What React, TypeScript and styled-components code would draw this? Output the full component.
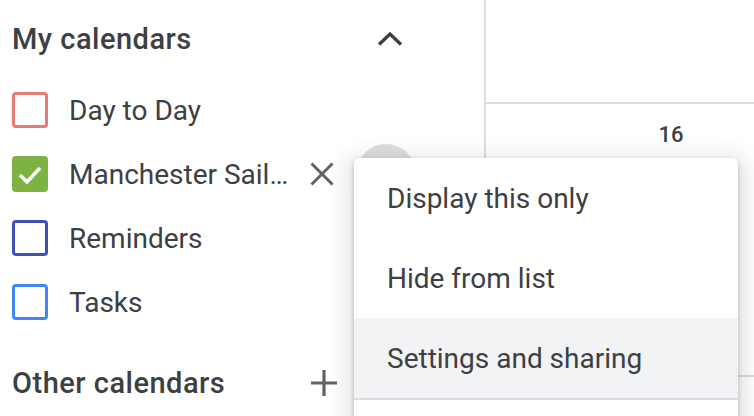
import React from "react";
import styled, { createGlobalStyle } from "styled-components";

const Global = createGlobalStyle`
  html, body { margin: 0; padding: 0; background: #fff; }
  body { font-family: Roboto, "Noto Sans", Arial, sans-serif; color: #3c4043; }
  * { box-sizing: border-box; }
`;

const Root = styled.div`
  position: relative;
  width: 754px;
  height: 416px;
  overflow: hidden;
  display: flex;
  background: #fff;
`;

const Sidebar = styled.aside`
  flex: 0 0 486px;
  width: 486px;
  min-width: 0;
  overflow: hidden;
  border-right: 2px solid #dadce0;
  padding: 0 68px 0 12px;
  display: flex;
  flex-direction: column;
`;

const Header = styled.div<{ $top?: number; $padRight?: number }>`
  height: 78px;
  margin-top: ${(p) => p.$top ?? 0}px;
  padding-right: ${(p) => p.$padRight ?? 0}px;
  display: flex;
  align-items: center;
  flex-shrink: 0;
  min-width: 0;
`;

const HeaderTitle = styled.h2`
  flex: 1;
  margin: 0;
  font-family: Roboto, Arial, sans-serif;
  font-weight: 500;
  font-size: 29px;
  letter-spacing: 0.5px;
  color: #3c4043;
  white-space: nowrap;
`;

const IconButton = styled.button<{ $size?: number; $hover?: boolean; $gap?: number }>`
  width: ${(p) => p.$size ?? 48}px;
  height: ${(p) => p.$size ?? 48}px;
  margin-left: ${(p) => p.$gap ?? 0}px;
  flex-shrink: 0;
  border: none;
  border-radius: 50%;
  padding: 0;
  background: ${(p) => (p.$hover ? "#dedfe0" : "transparent")};
  display: flex;
  align-items: center;
  justify-content: center;
  color: #5f6368;
`;

const Row = styled.div`
  height: 64px;
  display: flex;
  align-items: center;
  flex-shrink: 0;
  min-width: 0;
`;

const Box = styled.span<{ $color: string; $checked?: boolean }>`
  width: 36px;
  height: 36px;
  flex-shrink: 0;
  border: 3.5px solid ${(p) => p.$color};
  border-radius: 4px;
  background: ${(p) => (p.$checked ? p.$color : "transparent")};
  display: flex;
  align-items: center;
  justify-content: center;
  margin-right: 21px;
`;

const Label = styled.span`
  flex: 1;
  min-width: 0;
  font-size: 28px;
  color: #3c4043;
  white-space: nowrap;
  overflow: hidden;
  text-overflow: ellipsis;
  padding-right: 8px;
`;

const Main = styled.main`
  flex: 0 0 370px;
  display: flex;
  flex-direction: column;
`;

const TopCell = styled.div`
  height: 104px;
  border-bottom: 2px solid #dadce0;
  flex-shrink: 0;
`;

const DayCell = styled.div`
  height: 273px;
  border-bottom: 2px solid #dadce0;
  display: flex;
  justify-content: center;
  padding-top: 17px;
  flex-shrink: 0;
`;

const DayNum = styled.span`
  font-size: 22px;
  font-weight: 500;
  color: #3c4043;
  line-height: 28px;
  height: 28px;
`;

const Menu = styled.div`
  position: absolute;
  left: 354px;
  top: 158px;
  width: 384px;
  background: #fff;
  border-radius: 6px;
  box-shadow: 0 2px 4px 0 rgba(60, 64, 67, 0.3), 0 6px 20px 8px rgba(60, 64, 67, 0.15);
  display: flex;
  flex-direction: column;
  overflow: hidden;
`;

const MenuItem = styled.div<{ $active?: boolean }>`
  height: 80px;
  display: flex;
  align-items: center;
  padding-left: 33px;
  font-size: 28px;
  color: #3c4043;
  background: ${(p) => (p.$active ? "#f1f3f4" : "#fff")};
`;

const MenuDivider = styled.div`
  height: 2px;
  background: #dadce0;
  margin-bottom: 60px;
`;

const Check = () => (
  <svg width="30" height="30" viewBox="0 0 30 30">
    <polyline points="5,16 12,23 25,9" fill="none" stroke="#fff" strokeWidth="3.5" />
  </svg>
);

const Chevron = () => (
  <svg width="26" height="16" viewBox="0 0 26 16">
    <polyline points="2,13.5 13,3 24,13.5" fill="none" stroke="#3c4043" strokeWidth="3.4" />
  </svg>
);

const Close = () => (
  <svg width="24" height="24" viewBox="0 0 24 24">
    <path d="M1.5 1.5 L22.5 22.5 M22.5 1.5 L1.5 22.5" stroke="#5f6368" strokeWidth="3" />
  </svg>
);

const Plus = () => (
  <svg width="28" height="28" viewBox="0 0 28 28">
    <path d="M14 1 V27 M1 14 H27" stroke="#5f6368" strokeWidth="3.2" />
  </svg>
);

const calendars = [
  { name: "Day to Day", color: "#e67c73" },
  { name: "Manchester Sailing Club", color: "#7cb342", checked: true, active: true },
  { name: "Reminders", color: "#3f51b5" },
  { name: "Tasks", color: "#4285f4" },
];

export default function App() {
  return (
    <Root>
      <Global />
      <Sidebar>
        <Header $padRight={2}>
          <HeaderTitle>My calendars</HeaderTitle>
          <IconButton aria-label="Collapse">
            <Chevron />
          </IconButton>
        </Header>
        {calendars.map((c) => (
          <Row key={c.name}>
            <Box $color={c.color} $checked={c.checked}>
              {c.checked && <Check />}
            </Box>
            <Label>{c.name}</Label>
            {c.active && (
              <>
                <IconButton aria-label="Unsubscribe">
                  <Close />
                </IconButton>
                <IconButton $size={60} $hover $gap={10} aria-label="Options" />
              </>
            )}
          </Row>
        ))}
        <Header $top={10} $padRight={68}>
          <HeaderTitle>Other calendars</HeaderTitle>
          <IconButton aria-label="Add">
            <Plus />
          </IconButton>
        </Header>
      </Sidebar>
      <Main>
        <TopCell />
        <DayCell>
          <DayNum>16</DayNum>
        </DayCell>
      </Main>
      <Menu>
        <MenuItem>Display this only</MenuItem>
        <MenuItem>Hide from list</MenuItem>
        <MenuItem $active>Settings and sharing</MenuItem>
        <MenuDivider />
      </Menu>
    </Root>
  );
}
